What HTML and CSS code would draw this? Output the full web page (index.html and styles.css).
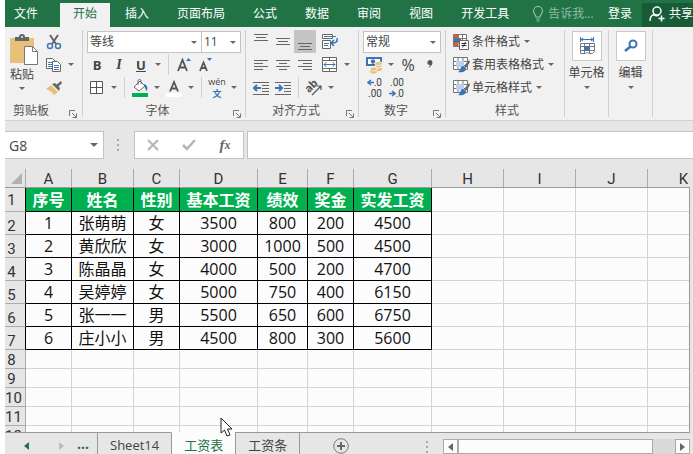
FILE: index.html
```html
<!DOCTYPE html>
<html lang="zh-CN">
<head>
  <meta charset="UTF-8">
  <title>工资表</title>
  <link rel="stylesheet" href="styles.css">
</head>
<body>
  <svg class="defs" width="0" height="0" aria-hidden="true">
    <symbol id="launcher" viewBox="0 0 8 8">
      <path d="M.5 6V.5H6M3 3l4 4M7.500 3.500V7.500H3.500" fill="none" stroke="#777"/>
    </symbol>
    <symbol id="brush" viewBox="0 0 18 18">
      <path d="M1.500 1.500h14v12h-14zM1.500 5.500h14M1.500 9.500h14M6 1.500v12M11 1.500v12" fill="#fff" stroke="#777"/>
      <path d="M4 5h8v6H4z" fill="#bdd0e8"/>
      <path d="M17 4l-5 6 2 2 4-6z" fill="#666"/>
      <path d="M11 10c-3 0-2 4-5 6 4 1 8 0 8-4z" fill="#3b74b4"/>
    </symbol>
  </svg>

  <div class="app">
    <nav class="tabs">
      <button class="tab file">文件</button>
      <button class="tab active">开始</button>
      <button class="tab">插入</button>
      <button class="tab">页面布局</button>
      <button class="tab">公式</button>
      <button class="tab">数据</button>
      <button class="tab">审阅</button>
      <button class="tab">视图</button>
      <button class="tab">开发工具</button>
      <button class="tell">
        <svg width="12" height="16" viewBox="0 0 12 16"><path d="M4 11C4 8.500 1.500 8 1.500 5a4.500 4.500 0 0 1 9 0C10.500 8 8 8.500 8 11zM4 13h4M4.500 15h3" fill="none" stroke="#8fbfa3" stroke-width="1.200"/></svg>
        告诉我...
      </button>
      <button class="login">登录</button>
      <button class="share">
        <svg width="17" height="16" viewBox="0 0 17 16"><path d="M1 15c0-4 2-6 4-6.500M8 1a4 4 0 1 1 0 8 4 4 0 0 1 0-8zM5 9c2 1 3 1 5 0M12.500 9.500v6M9.500 12.500h6" fill="none" stroke="#fff" stroke-width="1.500"/></svg>
        共享
      </button>
    </nav>

    <div class="ribbon">
      <section class="group clipboard">
        <div class="paste-area">
          <button class="paste">
            <svg width="34" height="32" viewBox="-4 0 34 32">
              <path d="M1 4h24v25H1z" fill="#e9c07a"/>
              <path d="M6 7V3h4a3 3 0 0 1 6 0h4v4z" fill="#666"/>
              <circle cx="13" cy="3" r="1" fill="#eee"/>
              <path d="M15.500 12.500h8l5 5v13h-13z" fill="#fff" stroke="#777"/>
              <path d="M23.500 12.500v5h5" fill="none" stroke="#777"/>
            </svg>
            粘贴
            <i class="caret"></i>
          </button>
          <div>
            <div class="row">
              <button class="tool" aria-label="剪切"><svg width="16" height="16" viewBox="0 0 16 16"><path d="M4 1l6 9M12 1L6 10" stroke="#666" stroke-width="2"/><circle cx="4" cy="12" r="2.500" fill="none" stroke="#4577ad" stroke-width="1.500"/><circle cx="12" cy="12" r="2.500" fill="none" stroke="#4577ad" stroke-width="1.500"/></svg></button>
            </div>
            <div class="row">
              <button class="tool" aria-label="复制"><svg width="16" height="16" viewBox="0 0 16 16"><path d="M.5 1.500h6l3 3v7h-9z" fill="#fff" stroke="#666"/><path d="M2 5.500h4M2 7.500h4M2 9.500h4" stroke="#4577ad"/><path d="M6.500 4.500h5l3 3v7h-8z" fill="#fff" stroke="#666"/><path d="M8 8.500h5M8 10.500h5M8 12.500h5" stroke="#4577ad"/></svg></button>
              <button class="drop" aria-label="复制选项"><i class="caret"></i></button>
            </div>
            <div class="row">
              <button class="tool" aria-label="格式刷"><svg width="16" height="16" viewBox="0 0 16 16"><path d="M15 1l-5 4 2 2 4-4z" fill="#666"/><path d="M6 4l3-1 5 5-1 3z" fill="#666"/><path d="M5 5l7 7-4 3C6 12 4 11 0 9z" fill="#e9c07a"/></svg></button>
            </div>
          </div>
        </div>
        <div class="caption"><span>剪贴板</span><button class="launch" aria-label="剪贴板选项"><svg width="8" height="8"><use href="#launcher"/></svg></button></div>
      </section>

      <section class="group font">
        <div class="row">
          <span class="combo family"><select aria-label="字体"><option>等线</option></select></span>
          <span class="combo size"><select aria-label="字号"><option>11</option></select></span>
        </div>
        <div class="row">
          <button class="tool bold">B</button>
          <button class="tool italic">I</button>
          <button class="tool underline">U</button>
          <button class="drop" aria-label="下划线选项"><i class="caret"></i></button>
          <i class="line"></i>
          <button class="tool" aria-label="增大字号"><svg width="16" height="16" viewBox="0 0 16 16"><path d="M2 14L6.500 3 11 14M3.500 10.500h6" fill="none" stroke="#555" stroke-width="1.800"/><path d="M10 4l2.500-3L15 4z" fill="#3b74b4"/></svg></button>
          <button class="tool" aria-label="减小字号"><svg width="16" height="16" viewBox="0 0 16 16"><path d="M2 14L5.500 5.500 9 14M3 11h5" fill="none" stroke="#555" stroke-width="1.800"/><path d="M9 1h5l-2.500 3z" fill="#3b74b4"/></svg></button>
        </div>
        <div class="row">
          <button class="tool" aria-label="边框"><svg width="14" height="14" viewBox="0 0 14 14"><path d="M.5.500h12v12H.5zM6.500.500v12M.5 6.500h12" fill="#fff" stroke="#555"/></svg></button>
          <button class="drop" aria-label="边框选项"><i class="caret"></i></button>
          <i class="line"></i>
          <button class="tool" aria-label="填充颜色"><svg width="18" height="18" viewBox="0 0 18 18"><path d="M3 8l6-6 5 5-6 5z" fill="#fff" stroke="#666"/><path d="M7 6V2c0-2 3-2 3 0v3" fill="none" stroke="#666"/><path d="M13 5c3 1 4 3 3 7-2-1-1-3-3-5z" fill="#3b74b4"/><path d="M1 14h16v4H1z" fill="#00b050"/></svg></button>
          <button class="drop" aria-label="填充选项"><i class="caret"></i></button>
          <button class="tool" aria-label="字体颜色"><svg width="18" height="18" viewBox="0 0 18 18"><path d="M5 12.500L9 3l4 9.500M6.500 9.500h5" fill="none" stroke="#555" stroke-width="1.800"/><path d="M1 14h16v4H1z" fill="#fff"/></svg></button>
          <button class="drop" aria-label="颜色选项"><i class="caret"></i></button>
          <i class="line"></i>
          <button class="tool pinyin"><span>wén</span><b>文</b></button>
          <button class="drop" aria-label="拼音选项"><i class="caret"></i></button>
        </div>
        <div class="caption"><span>字体</span><button class="launch" aria-label="字体选项"><svg width="8" height="8"><use href="#launcher"/></svg></button></div>
      </section>

      <section class="group align">
        <div class="row">
          <button class="tool" aria-label="顶端对齐"><svg width="14" height="18"><path d="M0 1.500h14M2 4.500h10M0 7.500h14" stroke="#666"/></svg></button>
          <button class="tool" aria-label="垂直居中"><svg width="14" height="18"><path d="M0 5.500h14M2 8.500h10M0 11.500h14" stroke="#666"/></svg></button>
          <button class="tool pressed" aria-label="底端对齐"><svg width="14" height="18"><path d="M0 10.500h14M2 13.500h10M0 16.500h14" stroke="#666"/></svg></button>
          <button class="tool wrap" aria-label="自动换行"><svg width="18" height="18" viewBox="0 0 18 18"><path d="M1.500 1.500h10v4h-10zM1.500 7.500h8v8h-8z" fill="#fff" stroke="#666"/><path d="M3 3.500h12M3 10.500h5M3 12.500h4" stroke="#4577ad"/><path d="M16 5c1 4-1 5-5 5M13 7l-3 3 3 3" fill="none" stroke="#3b74b4" stroke-width="1.500"/></svg></button>
        </div>
        <div class="row">
          <button class="tool" aria-label="左对齐"><svg width="14" height="12"><path d="M0 1.500h14M0 4.500h9M0 7.500h14M0 10.500h9" stroke="#666"/></svg></button>
          <button class="tool" aria-label="居中"><svg width="14" height="12"><path d="M0 1.500h14M3 4.500h8M0 7.500h14M3 10.500h8" stroke="#666"/></svg></button>
          <button class="tool" aria-label="右对齐"><svg width="14" height="12"><path d="M0 1.500h14M5 4.500h9M0 7.500h14M5 10.500h9" stroke="#666"/></svg></button>
          <button class="tool wrap" aria-label="合并后居中"><svg width="16" height="16" viewBox="0 0 16 16"><path d="M.5.500h14v14H.5zM.5 3.500h14M.5 11.500h14M7.500.500v3M7.500 11.500v3" fill="#fff" stroke="#666"/><path d="M2 7.500h11M4.500 5L2 7.500 4.500 10M10.500 5L13 7.500 10.500 10" fill="none" stroke="#3b74b4"/></svg></button>
          <button class="drop" aria-label="合并选项"><i class="caret"></i></button>
        </div>
        <div class="row">
          <button class="tool" aria-label="减少缩进"><svg width="16" height="14" viewBox="0 0 16 14"><path d="M0 1.500h16M9 4.500h7M9 7.500h7M9 10.500h7M0 13.500h16" stroke="#666"/><path d="M1 7h7M4 4L1 7l3 3" fill="none" stroke="#3b74b4" stroke-width="2"/></svg></button>
          <button class="tool" aria-label="增加缩进"><svg width="16" height="14" viewBox="0 0 16 14"><path d="M0 1.500h16M9 4.500h7M9 7.500h7M9 10.500h7M0 13.500h16" stroke="#666"/><path d="M0 7h7M4 4l3 3-3 3" fill="none" stroke="#3b74b4" stroke-width="2"/></svg></button>
          <i class="line"></i>
          <button class="tool" aria-label="方向"><svg class="rotate" width="18" height="18" viewBox="0 0 18 18"><text x="0" y="11" transform="rotate(-45 6 8)" class="angle">ab</text><path d="M7 16l9-9M12 7h4v4" fill="none" stroke="#555" stroke-width="1.200"/></svg></button>
          <button class="drop" aria-label="方向选项"><i class="caret"></i></button>
        </div>
        <div class="caption"><span>对齐方式</span><button class="launch" aria-label="对齐选项"><svg width="8" height="8"><use href="#launcher"/></svg></button></div>
      </section>

      <section class="group number">
        <div class="row">
          <span class="combo format"><select aria-label="数字格式"><option>常规</option></select></span>
        </div>
        <div class="row">
          <button class="tool" aria-label="会计格式"><svg width="18" height="18" viewBox="0 0 18 18"><path d="M1 1h16v9H1z" fill="#3b74b4"/><path d="M3 3h12v5H3z" fill="#fff"/><circle cx="8" cy="5.500" r="2.200" fill="#3b74b4"/><ellipse cx="13.500" cy="13" rx="3.500" ry="2" fill="#e9c07a"/><ellipse cx="13.500" cy="10" rx="3.500" ry="2" fill="#e9c07a" stroke="#fff" stroke-width=".7"/><ellipse cx="13.500" cy="7.500" rx="3.500" ry="2" fill="#e9c07a" stroke="#fff" stroke-width=".7"/><ellipse cx="8.500" cy="15.500" rx="3.500" ry="2" fill="#e9c07a"/><ellipse cx="8.500" cy="13" rx="3.500" ry="2" fill="#e9c07a" stroke="#fff" stroke-width=".7"/></svg></button>
          <button class="drop" aria-label="会计选项"><i class="caret"></i></button>
          <button class="tool percent">%</button>
          <button class="tool" aria-label="千位分隔"><svg width="6" height="9" viewBox="0 0 6 9"><path d="M3 0c4 0 3 6-2 8 1-1 2-2 2-3C-1 5 0 0 3 0z" fill="#555"/></svg></button>
        </div>
        <div class="row">
          <button class="tool decimal"><span><svg width="7" height="7" viewBox="0 0 7 7"><path d="M1 3.500h6M4 1L1 3.500 4 6" fill="none" stroke="#3b74b4" stroke-width="1.500"/></svg>.0</span><span>.00</span></button>
          <button class="tool decimal"><span>.00</span><span><svg width="7" height="7" viewBox="0 0 7 7"><path d="M0 3.500h6M3 1l3 2.500L3 6" fill="none" stroke="#3b74b4" stroke-width="1.500"/></svg>.0</span></button>
        </div>
        <div class="caption"><span>数字</span><button class="launch" aria-label="数字选项"><svg width="8" height="8"><use href="#launcher"/></svg></button></div>
      </section>

      <section class="group styles">
        <button class="row item">
          <svg width="18" height="18" viewBox="0 0 18 18"><path d="M1.500 1.500h13v12h-13zM6 1.500v12M10.500 1.500v12M1.500 5.500h13M1.500 9.500h13" fill="#fff" stroke="#777"/><path d="M2 2h5v3H2zM2 10h4v3H2z" fill="#d55b3b"/><path d="M2 6h7v3H2z" fill="#3b74b4"/><path d="M7.500 7.500h9v9h-9z" fill="#fff" stroke="#666"/><path d="M9.500 10.500h5M9.500 12.500h5M13.500 9l-3 5.500" stroke="#333"/></svg>
          条件格式<i class="caret"></i>
        </button>
        <button class="row item"><svg width="18" height="18"><use href="#brush"/></svg>套用表格格式<i class="caret"></i></button>
        <button class="row item"><svg width="18" height="18"><use href="#brush"/></svg>单元格样式<i class="caret"></i></button>
        <div class="caption"><span>样式</span></div>
      </section>

      <section class="group big">
        <button class="large">
          <span class="tile"><svg width="16" height="18" viewBox="0 0 16 18"><path d="M2 2.500h12M1.500 0v5M14.500 0v5M4 1L2 2.500 4 4M12 1l2 1.500L12 4" fill="none" stroke="#3b74b4"/><path d="M1.500 6.500h14v8l-2 2h-3l-2-1-2 1h-5zM5.500 6.500v10M10.500 6.500v10M1.500 9.500h14M1.500 13.500h14" fill="#fff" stroke="#777"/><path d="M5 9h5v5H5z" fill="#3b74b4"/></svg></span>
          单元格<i class="caret"></i>
        </button>
      </section>
      <section class="group big">
        <button class="large">
          <span class="tile"><svg width="14" height="14" viewBox="0 0 14 14"><circle cx="9" cy="5" r="3.500" fill="none" stroke="#3b74b4" stroke-width="2"/><path d="M6.500 7.500L1 12" stroke="#3b74b4" stroke-width="2.500"/></svg></span>
          编辑<i class="caret"></i>
        </button>
      </section>
    </div>

    <div class="formula-bar">
      <span class="combo name"><input type="text" value="G8" aria-label="名称框"></span>
      <i class="dots"></i>
      <div class="actions">
        <button aria-label="取消"><svg width="12" height="12" viewBox="0 0 12 12"><path d="M1 1l10 10M11 1L1 11" stroke="#b5b5b5" stroke-width="2"/></svg></button>
        <button aria-label="输入"><svg width="14" height="12" viewBox="0 0 14 12"><path d="M1 6l4 4 8-9" fill="none" stroke="#b5b5b5" stroke-width="2.500"/></svg></button>
        <button class="fx"><i>f</i><sub>x</sub></button>
      </div>
      <input class="formula" type="text" aria-label="编辑栏">
    </div>

    <main class="sheet">
      <table>
        <colgroup>
          <col class="w-head"><col class="w-s"><col class="w-m"><col class="w-s"><col class="w-xl"><col class="w-e"><col class="w-s"><col class="w-xl"><col class="w-l"><col class="w-l"><col class="w-l"><col class="w-l">
        </colgroup>
        <thead>
          <tr>
            <th class="corner"><svg width="11" height="11"><path d="M11 0v11H0z" fill="#b1b1b1"/></svg></th>
            <th>A</th><th>B</th><th>C</th><th>D</th><th>E</th><th>F</th><th>G</th><th>H</th><th>I</th><th>J</th><th>K</th>
          </tr>
        </thead>
        <tbody class="data">
          <tr class="title"><th>1</th><td>序号</td><td>姓名</td><td>性别</td><td>基本工资</td><td>绩效</td><td>奖金</td><td>实发工资</td><td></td><td></td><td></td><td></td></tr>
          <tr><th>2</th><td>1</td><td>张萌萌</td><td>女</td><td>3500</td><td>800</td><td>200</td><td>4500</td><td></td><td></td><td></td><td></td></tr>
          <tr><th>3</th><td>2</td><td>黄欣欣</td><td>女</td><td>3000</td><td>1000</td><td>500</td><td>4500</td><td></td><td></td><td></td><td></td></tr>
          <tr><th>4</th><td>3</td><td>陈晶晶</td><td>女</td><td>4000</td><td>500</td><td>200</td><td>4700</td><td></td><td></td><td></td><td></td></tr>
          <tr><th>5</th><td>4</td><td>吴婷婷</td><td>女</td><td>5000</td><td>750</td><td>400</td><td>6150</td><td></td><td></td><td></td><td></td></tr>
          <tr><th>6</th><td>5</td><td>张一一</td><td>男</td><td>5500</td><td>650</td><td>600</td><td>6750</td><td></td><td></td><td></td><td></td></tr>
          <tr><th>7</th><td>6</td><td>庄小小</td><td>男</td><td>4500</td><td>800</td><td>300</td><td>5600</td><td></td><td></td><td></td><td></td></tr>
        </tbody>
        <tbody>
          <tr><th>8</th><td></td><td></td><td></td><td></td><td></td><td></td><td></td><td></td><td></td><td></td><td></td></tr>
          <tr><th>9</th><td></td><td></td><td></td><td></td><td></td><td></td><td></td><td></td><td></td><td></td><td></td></tr>
          <tr><th>10</th><td></td><td></td><td></td><td></td><td></td><td></td><td></td><td></td><td></td><td></td><td></td></tr>
          <tr><th>11</th><td></td><td></td><td></td><td></td><td></td><td></td><td></td><td></td><td></td><td></td><td></td></tr>
          <tr><th>12</th><td></td><td></td><td></td><td></td><td></td><td></td><td></td><td></td><td></td><td></td><td></td></tr>
        </tbody>
      </table>
    </main>

    <footer class="bottom">
      <button class="nav" aria-label="上一个"><svg width="5" height="8"><path d="M5 0v8L0 4z" fill="#217346"/></svg></button>
      <button class="nav" aria-label="下一个"><svg width="5" height="8"><path d="M0 0v8l5-4z" fill="#bbb"/></svg></button>
      <button class="nav more">...</button>
      <button class="sheet-tab">Sheet14</button>
      <button class="sheet-tab current">工资表</button>
      <button class="sheet-tab">工资条</button>
      <button class="add" aria-label="新工作表"><svg width="16" height="16" viewBox="0 0 16 16"><circle cx="8" cy="8" r="7.300" fill="none" stroke="#777"/><path d="M8 4v8M4 8h8" stroke="#666" stroke-width="2"/></svg></button>
      <i class="dots"></i>
      <div class="scroll">
        <button aria-label="向左滚动"><svg width="5" height="8"><path d="M5 0v8L0 4z" fill="#666"/></svg></button>
        <div class="track"><div class="thumb"></div></div>
        <button aria-label="向右滚动"><svg width="5" height="8"><path d="M0 0v8l5-4z" fill="#666"/></svg></button>
      </div>
    </footer>
  </div>

  <svg class="pointer" width="13" height="20" viewBox="0 0 13 20"><path d="M1 1v15l3.500-3 2.500 6 3-1-2.500-6H12z" fill="#fff" stroke="#222"/></svg>
</body>
</html>
```
FILE: styles.css
```css
* {
  box-sizing: border-box;
}
body {
  margin: 0;
  padding-left: 5px;
  background-color: #fff;
  color: #444;
  font-family: "Open Sans", "Noto Sans CJK SC", sans-serif;
  font-size: 12px;
  line-height: 16px;
  overflow: hidden;
}
button, select, input {
  font: inherit;
  color: inherit;
  margin: 0;
  padding: 0;
  border: none;
  border-radius: 0;
  background: none;
}
svg {
  display: block;
  flex: none;
}
.defs {
  position: absolute;
}
.app {
  display: flex;
  flex-direction: column;
  height: 100vh;
  background-color: #e6e6e6;
}

/* tabs */
.tabs {
  display: flex;
  gap: 2px;
  height: 27px;
  padding-top: 3px;
  background-color: #217346;
  color: #fff;
  white-space: nowrap;
}
.tabs button {
  flex: none;
  padding-bottom: 2px;
}
.tabs .tab {
  padding-left: 13px;
  padding-right: 13px;
}
.tabs .file {
  padding-left: 9px;
  padding-right: 20px;
}
.tabs .active {
  background-color: #f1f1f1;
  color: #217346;
}
.tell, .share {
  display: flex;
  align-items: center;
  gap: 4px;
}
.tell {
  margin-left: 8px;
  color: #8fbfa3;
}
.tabs .login {
  margin-left: auto;
  padding-right: 8px;
}
.tabs .share {
  gap: 3px;
  padding-left: 7px;
  background-color: #185c37;
}

/* ribbon */
.ribbon {
  display: flex;
  height: 94px;
  padding-top: 3px;
  background-color: #f1f1f1;
  border-bottom: 1px solid #d0d0d0;
}
.group {
  flex: none;
  height: 87px;
  padding-left: 4px;
  border-right: 1px solid #d0d0d0;
}
.clipboard {
  width: 78px;
  padding-left: 0;
}
.font {
  width: 163px;
  padding-left: 3px;
}
.align {
  width: 113px;
}
.number {
  width: 87px;
}
.styles {
  width: 119px;
}
.big {
  width: 44px;
  padding: 1px 0 0;
}
.row {
  display: flex;
  align-items: center;
  height: 23px;
}
.tool, .drop {
  display: flex;
  align-items: center;
  justify-content: center;
  flex: none;
  height: 23px;
}
.tool {
  width: 22px;
}
.drop {
  width: 12px;
}
.wrap {
  margin-left: 3px;
}
.pressed {
  background-color: #c5c5c5;
}
.caret {
  flex: none;
  border: 3px solid transparent;
  border-top-color: #666;
  border-bottom: none;
}
.line {
  width: 1px;
  height: 21px;
  margin: 0 4px;
  background-color: #d0d0d0;
}
.caption {
  display: flex;
  align-items: center;
  height: 24px;
  text-align: center;
  color: #555;
}
.caption span {
  flex: 1;
}
.launch {
  width: 16px;
  padding: 6px 4px 0;
}
.clipboard .caption {
  padding-right: 1px;
}
.clipboard .launch {
  width: 24px;
  padding-left: 12px;
}
.paste-area {
  display: flex;
}
.paste, .large {
  display: flex;
  flex-direction: column;
  align-items: center;
}
.paste {
  width: 34px;
  margin-right: 4px;
  padding-top: 4px;
  line-height: 18px;
}
.paste .caret {
  margin-top: 3px;
}
.combo {
  position: relative;
  height: 22px;
  background-color: #fff;
  border: 1px solid #c3c3c3;
}
.combo::after {
  content: "";
  position: absolute;
  right: 4px;
  top: 9px;
  border: 3px solid transparent;
  border-top-color: #666;
  border-bottom: none;
  pointer-events: none;
}
.combo select, .combo input {
  display: block;
  width: 100%;
  height: 100%;
  padding-left: 2px;
  appearance: none;
}
.family {
  width: 115px;
  margin-left: 1px;
}
.size {
  width: 40px;
  margin-left: -1px;
}
.format {
  width: 78px;
}
.bold, .underline {
  font-weight: bold;
  font-size: 13px;
}
.italic {
  font-family: "Liberation Serif", serif;
  font-style: italic;
  font-weight: bold;
  font-size: 14px;
}
.underline {
  text-decoration: underline;
}
.pinyin {
  flex-direction: column;
  font-size: 9px;
  line-height: 12px;
}
.pinyin b {
  color: #3b74b4;
}
.rotate {
  overflow: visible;
}
.angle {
  font-size: 11px;
  font-weight: bold;
  fill: #555;
}
.percent {
  font-size: 16px;
}
.decimal {
  flex-direction: column;
  align-items: flex-end;
  padding-right: 3px;
  font-family: Roboto, sans-serif;
  font-size: 10px;
  line-height: 11px;
}
.decimal span {
  display: flex;
  align-items: center;
}
.item {
  gap: 2px;
  padding-left: 2px;
  white-space: nowrap;
}
.item .caret {
  margin-left: 2px;
}
.large {
  width: 100%;
  white-space: nowrap;
}
.tile {
  display: flex;
  align-items: center;
  justify-content: center;
  width: 30px;
  height: 30px;
  margin-bottom: 4px;
  background-color: #fff;
  border: 1px solid #c8c8c8;
}
.large .caret {
  margin-top: 5px;
}

/* formula bar */
.formula-bar {
  display: flex;
  height: 48px;
  padding: 10px 0;
}
.name {
  width: 99px;
  height: 28px;
  border-left: none;
  font-size: 14px;
}
.name::after {
  right: 5px;
  top: 11px;
  border-width: 4px 4px 0;
}
.combo.name input {
  padding-left: 4px;
}
.dots {
  width: 2px;
  height: 12px;
  background: repeating-linear-gradient(#aaa 0 2px, transparent 2px 5px);
}
.formula-bar .dots {
  margin: 8px 15px 0 13px;
}
.actions {
  display: flex;
  width: 110px;
  height: 28px;
  margin-right: 3px;
  background-color: #fff;
  border: 1px solid #c3c3c3;
}
.actions button {
  display: flex;
  flex: 1;
  align-items: center;
  justify-content: center;
}
.actions .fx {
  font-family: "Liberation Serif", serif;
  font-size: 15px;
  font-style: italic;
  font-weight: bold;
  color: #666;
}
.fx sub {
  font-size: 12px;
}
.formula {
  flex: 1;
  min-width: 0;
  height: 28px;
  background-color: #fff;
  border: 1px solid #c3c3c3;
  border-right: none;
}

/* sheet */
.sheet {
  position: relative;
  flex: 1;
  min-height: 0;
  margin-right: 3px;
  overflow: hidden;
}
.sheet::after {
  content: "";
  position: absolute;
  top: 18px;
  right: 0;
  bottom: 0;
  border-right: 1px solid #999;
}
table {
  table-layout: fixed;
  width: 715px;
  border-collapse: separate;
  border-spacing: 0;
  color: #111;
}
.w-head { width: 21px; }
.w-s { width: 46px; }
.w-m { width: 62px; }
.w-e { width: 50px; }
.w-l { width: 72px; }
.w-xl { width: 78px; }
th, td {
  height: 19px;
  padding: 0;
  border-right: 1px solid #d4d4d4;
  border-bottom: 1px solid #d4d4d4;
  text-align: center;
}
th {
  font-family: Roboto, sans-serif;
  font-size: 15px;
  line-height: 16px;
  font-weight: normal;
  color: #333;
  background-color: #e6e6e6;
  border-color: #ababab;
}
td {
  background-color: #fcfcfc;
}
thead th {
  border-bottom-color: #999;
  vertical-align: bottom;
}
.corner svg {
  margin: 0 0 3px 6px;
}
tbody th {
  padding-right: 7px;
  vertical-align: bottom;
}
.data th, .data td {
  height: 23px;
}
.data td {
  font-size: 16px;
  line-height: 22px;
}
.data .title th, .data .title td {
  height: 24px;
}
.title th {
  vertical-align: middle;
}
.data td:nth-child(-n+8) {
  border-color: #000;
}
.data th {
  border-right-color: #000;
}
.title td:nth-child(-n+8) {
  background-color: #00b050;
  color: #fff;
  font-weight: bold;
}

/* bottom bar */
.bottom {
  display: flex;
  flex: none;
  height: 22px;
  padding-right: 3px;
}
.bottom > * {
  flex: none;
  border-top: 1px solid #999;
}
.bottom button {
  display: flex;
  align-items: center;
  justify-content: center;
}
.bottom .nav {
  width: 29px;
  padding-top: 4px;
}
.bottom .nav:first-child {
  width: 42px;
}
.bottom .more {
  width: 21px;
  padding: 0 7px 0 0;
  font-weight: bold;
  font-size: 14px;
  color: #217346;
}
.sheet-tab {
  padding: 2px 12px 0;
  font-size: 13px;
  border-left: 1px solid #999;
}
.bottom .current {
  background-color: #fcfcfc;
  border-top-color: #fcfcfc;
  color: #217346;
}
.bottom .add {
  flex: 1;
  justify-content: flex-start;
  padding: 4px 0 0 33px;
  border-left: 1px solid #999;
}
.bottom .dots {
  width: 17px;
  height: 22px;
  padding-top: 8px;
  background: none;
}
.bottom .dots::before {
  content: "";
  display: block;
  width: 2px;
  height: 12px;
  background: repeating-linear-gradient(#aaa 0 2px, transparent 2px 5px);
}
.scroll {
  display: flex;
  width: 36%;
  padding-top: 6px;
}
.scroll button {
  width: 15px;
  height: 15px;
  background-color: #fcfcfc;
  border: 1px solid #ababab;
}
.track {
  flex: 1;
  height: 15px;
  background-color: #dadada;
}
.thumb {
  width: 90%;
  height: 15px;
  background-color: #fcfcfc;
  border: 1px solid #ababab;
}

.pointer {
  position: absolute;
  left: 220px;
  top: 417px;
}
```
